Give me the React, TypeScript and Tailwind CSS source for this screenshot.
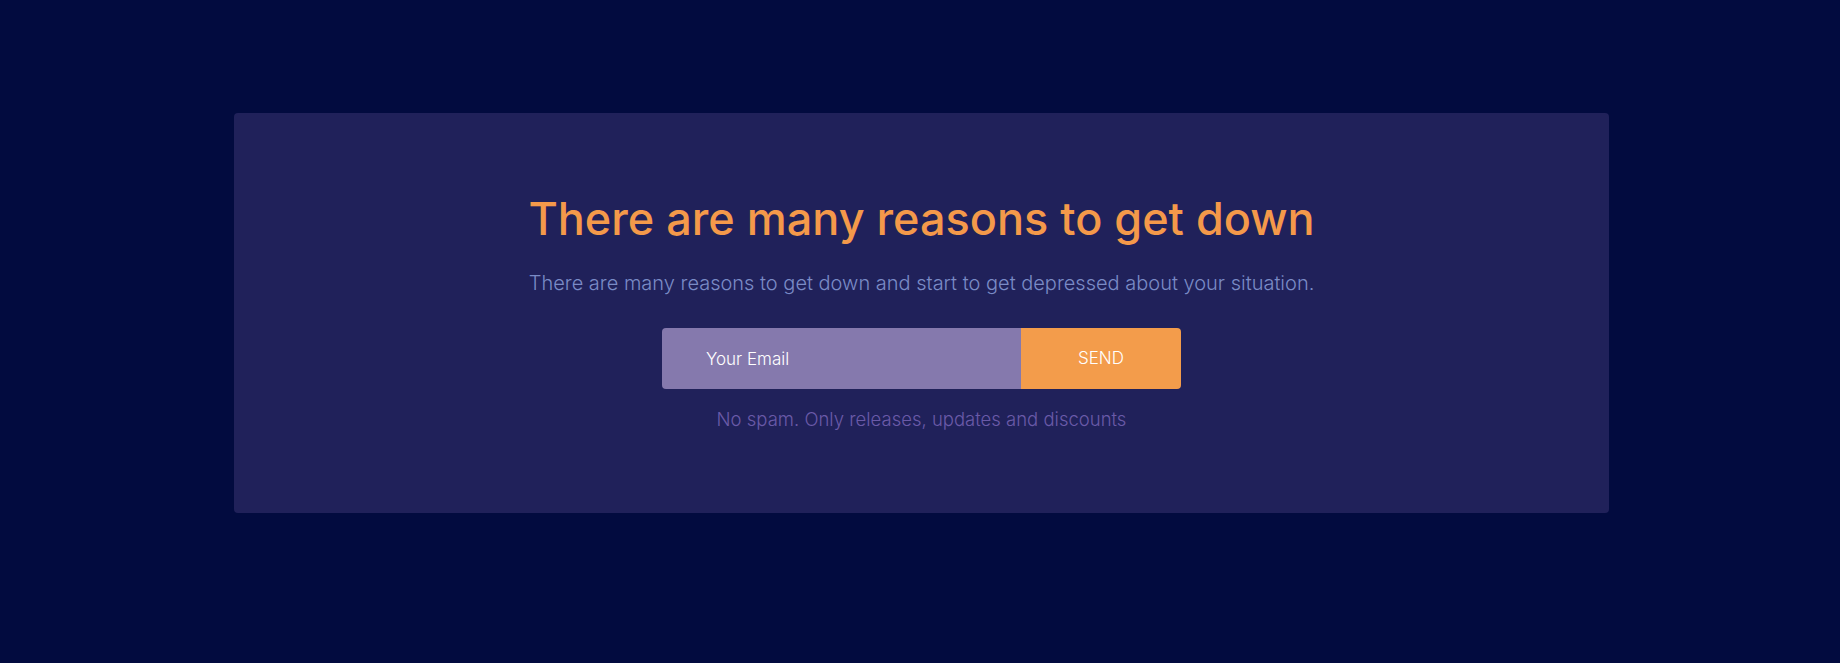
export default function App() {
  return (
    <div className="min-h-[663px] w-full bg-[#020b3f] pt-[113px] font-['Inter',sans-serif]">
      <div className="ml-[234px] flex h-[400px] w-[1375px] flex-col items-center rounded bg-[#20215a] pt-[78px]">
        <h1 className="text-[45px] font-medium leading-[56px] text-[#f4994a]">
          There are many reasons to get down
        </h1>
        <p className="mt-[22px] text-[20px] font-light leading-[28px] text-[#7a8bc6]">
          There are many reasons to get down and start to get depressed about your situation.
        </p>
        <form className="mt-[31px] flex w-[519px]" onSubmit={(e) => e.preventDefault()}>
          <input
            type="email"
            placeholder="Your Email"
            className="h-[61px] w-[359px] rounded-l bg-[#8579ad] pl-[44px] text-[17px] font-light text-white placeholder:text-white outline-none"
          />
          <button
            type="submit"
            className="h-[61px] w-[160px] rounded-r bg-[#f39c4b] text-[17px] font-light text-white"
          >
            SEND
          </button>
        </form>
        <p className="mt-[17px] text-[18.5px] font-light leading-[26px] text-[#6a5aa8]">
          No spam. Only releases, updates and discounts
        </p>
      </div>
    </div>
  );
}
